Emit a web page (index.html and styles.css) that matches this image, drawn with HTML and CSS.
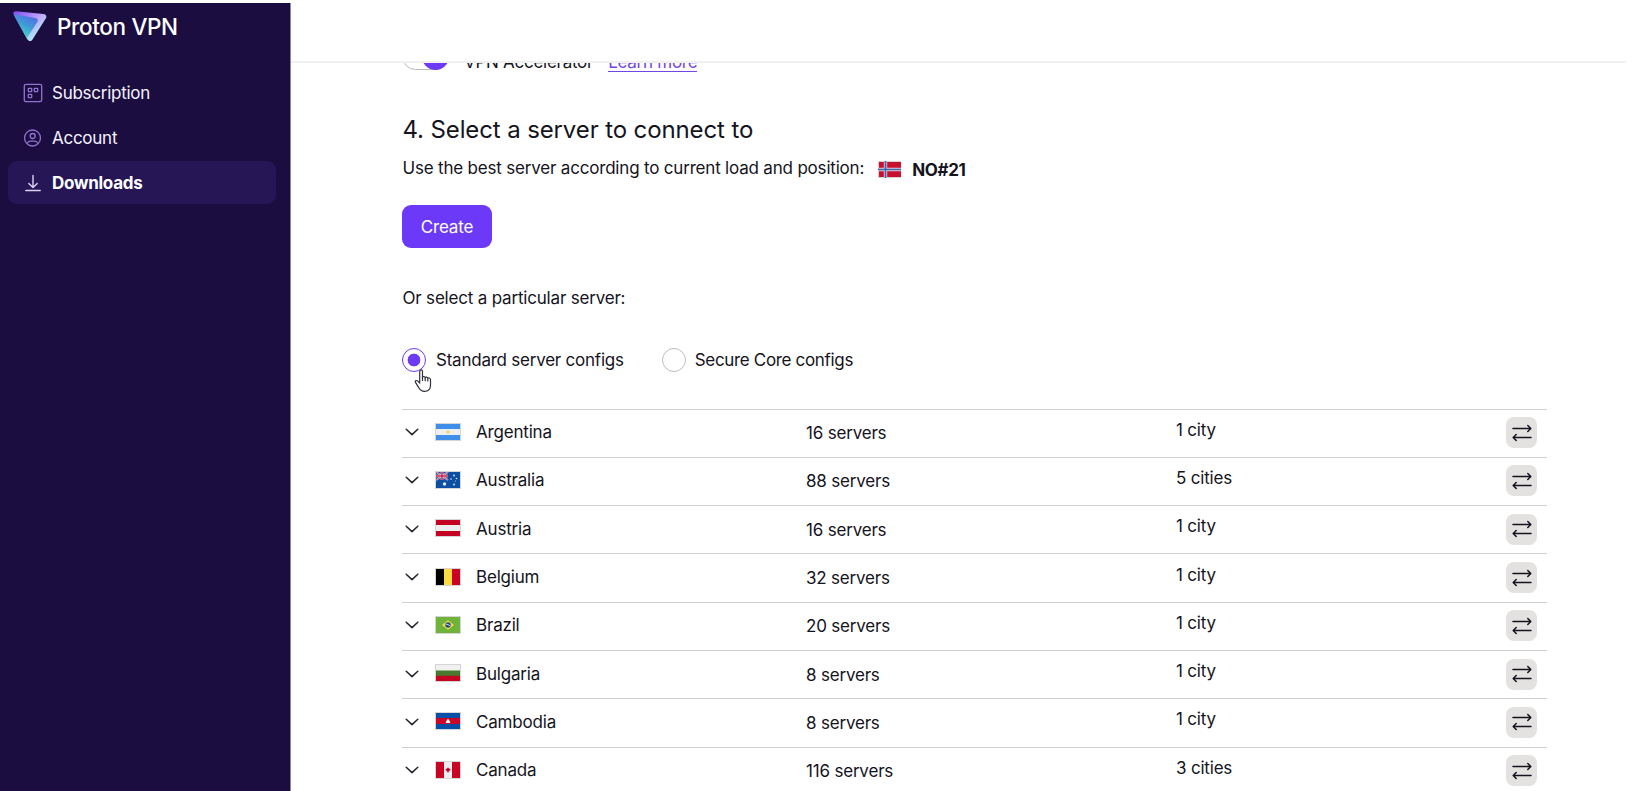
FILE: index.html
```
<!DOCTYPE html>
<html lang="en">
<head>
<meta charset="utf-8">
<title>Proton VPN</title>
<link rel="stylesheet" href="styles.css">
</head>
<body>
<svg class="defs" aria-hidden="true">
  <symbol id="chevron" viewBox="0 0 14 8"><path d="M1.2 1.2 7 6.6l5.800-5.400" fill="none" stroke="#25232c" stroke-width="1.500" stroke-linecap="round" stroke-linejoin="round"/></symbol>
  <symbol id="swap" viewBox="0 0 20 18"><g fill="none" stroke="#15131c" stroke-width="1.500" stroke-linecap="round" stroke-linejoin="round"><path d="M1 4.500h17.500M15.800 1.500l3 3-3 3"/><path d="M19 13.500H1.500M4.200 10.500l-3 3 3 3"/></g></symbol>
</svg>
<div class="app">
  <aside class="sidebar">
    <div class="brand">
      <svg class="brand-mark" width="34" height="32" viewBox="0 0 34 32">
        <defs>
          <linearGradient id="g1" x1="0" y1="0" x2="1" y2="1"><stop offset="0" stop-color="#8247ef"/><stop offset=".5" stop-color="#c0a8ff"/><stop offset=".85" stop-color="#a5fff0"/></linearGradient>
          <linearGradient id="g2" x1=".9" y1="0" x2=".4" y2="1"><stop offset="0" stop-color="#5864e8"/><stop offset=".5" stop-color="#3f9bd6"/><stop offset="1" stop-color="#45e0c4"/></linearGradient>
        </defs>
        <path d="M3 .3 30.500 3c2.500.3 3.600 2.200 2.400 4.300L19.500 28.500c-1.400 2.200-4 2-5.200-.2L.6 3.500C-.3 1.700 1 .1 3 .3z" fill="url(#g1)"/>
        <path d="M1 4.300c1-.8 2-.8 3.500-.6L22.500 7c2.200.4 3 2.200 1.800 4.100L14.800 25.500c-.6 1-.7 1.800-.4 2.900z" fill="url(#g2)"/>
      </svg>
      <span class="brand-name">Proton VPN</span>
    </div>
    <nav class="nav">
      <a class="nav-item"><svg width="20" height="20" viewBox="0 0 20 20" fill="none" stroke="#8f74cf" stroke-width="1.300"><rect x="1.300" y="1.300" width="17.400" height="17.400" rx="1.800"/><rect x="5.300" y="5.300" width="3.400" height="3.400" rx=".5"/><rect x="11.300" y="5.300" width="3.400" height="3.400" rx=".5"/><rect x="5.300" y="11.300" width="3.400" height="3.400" rx=".5"/></svg><span>Subscription</span></a>
      <a class="nav-item"><svg width="20" height="20" viewBox="0 0 20 20" fill="none" stroke="#8f74cf" stroke-width="1.300"><circle cx="9.500" cy="10" r="8"/><circle cx="9.700" cy="8" r="2.500"/><path d="M4.200 15.500c.6-1.600 1.500-2.300 3-2.300h4.600c1.500 0 2.400.7 3 2.300"/></svg><span>Account</span></a>
      <a class="nav-item active"><svg width="20" height="20" viewBox="0 0 20 20" fill="none" stroke="#ddd3f5" stroke-width="1.400" stroke-linecap="round" stroke-linejoin="round"><path d="M10 2.500v12M5.800 10.400l4.200 4.200 4.200-4.200M2.800 17.500h14.400"/></svg><span>Downloads</span></a>
    </nav>
  </aside>
  <main class="main">
    <header class="topbar"></header>
    <div class="scroll">
      <div class="accelerator"><span class="toggle"><i></i></span><span class="acc-label">VPN Accelerator</span><a class="learn">Learn more</a></div>
      <h2>4. Select a server to connect to</h2>
      <div class="best"><span class="best-text">Use the best server according to current load and position:</span>
        <svg class="no-flag" width="23" height="17" viewBox="0 0 23 17"><path fill="#d8cfd2" d="M0 0h23v17H0z"/><path fill="#c8102e" d="M1 1h22v15H1z"/><path stroke="#e5c8d4" stroke-width="3.400" d="M7.500 0v17M0 8.500h23"/><path stroke="#3f68b4" stroke-width="1.700" d="M7.500 0v17M0 8.500h23"/></svg>
        <strong>NO#21</strong></div>
      <button class="create">Create</button>
      <p class="or">Or select a particular server:</p>
      <div class="radios">
        <label class="radio checked"><i></i><span>Standard server configs</span>
          <svg class="cursor" width="19" height="24" viewBox="0 0 19 24"><path d="M5.700 14V2.400c0-2 2.800-2 2.800 0v6.100c.2-1.500 2.600-1.300 2.700.4.400-1.300 2.500-1 2.600.7.500-1.100 2.500-.9 2.700.9v5.500c0 4.200-2.200 6.400-6 6.400-3 0-4.600-1.300-5.800-3.800L1.500 13.400c-.9-1.800 1.300-2.500 2.400-1.200z" fill="#fff" stroke="#33313c" stroke-width="1.200" stroke-linejoin="round"/><path d="M8.500 8v4M11.200 9v3.200M13.800 10v2.500" stroke="#33313c" stroke-width="1.200"/></svg></label>
        <label class="radio secure"><i></i><span>Secure Core configs</span></label>
      </div>
      <div class="servers">
        <div class="row"><svg class="chev"><use href="#chevron"/></svg><svg class="flag" viewBox="0 0 24 16"><path fill="#3f8fe8" d="M0 0h24v16H0z"/><path fill="#eee" d="M0 5h24v6H0z"/><ellipse cx="12" cy="8" rx="1.800" ry="1.200" fill="#f3d54a"/></svg><span class="name">Argentina</span><span class="count">16 servers</span><span class="city">1 city</span><button class="swap"><svg><use href="#swap"/></svg></button></div>
        <div class="row"><svg class="chev"><use href="#chevron"/></svg><svg class="flag" viewBox="0 0 24 16"><path fill="#0b4ea2" d="M0 0h24v16H0z"/><path stroke="#d9cfe4" stroke-width="1.800" d="M0 0l12 8M12 0 0 8"/><path stroke="#c8284f" stroke-width=".7" d="M0 0l12 8M12 0 0 8"/><path stroke="#e8d9e6" stroke-width="2.600" d="M6 0v8M0 4h12"/><path stroke="#c8284f" stroke-width="1.500" d="M6 0v8M0 4h12"/><g fill="#dceaff"><circle cx="8.500" cy="12" r="1.700"/><circle cx="18" cy="3.500" r=".9"/><circle cx="15" cy="7" r=".8"/><circle cx="20.500" cy="6.500" r=".8"/><circle cx="18" cy="12.500" r=".9"/><circle cx="19.300" cy="9" r=".5"/></g></svg><span class="name">Australia</span><span class="count">88 servers</span><span class="city">5 cities</span><button class="swap"><svg><use href="#swap"/></svg></button></div>
        <div class="row"><svg class="chev"><use href="#chevron"/></svg><svg class="flag" viewBox="0 0 24 16"><path fill="#c40222" d="M0 0h24v16H0z"/><path fill="#eee" d="M0 5h24v6H0z"/></svg><span class="name">Austria</span><span class="count">16 servers</span><span class="city">1 city</span><button class="swap"><svg><use href="#swap"/></svg></button></div>
        <div class="row"><svg class="chev"><use href="#chevron"/></svg><svg class="flag" viewBox="0 0 24 16"><path fill="#000" d="M0 0h8v16H0z"/><path fill="#fbdb42" d="M8 0h8v16H8z"/><path fill="#c90226" d="M16 0h8v16h-8z"/></svg><span class="name">Belgium</span><span class="count">32 servers</span><span class="city">1 city</span><button class="swap"><svg><use href="#swap"/></svg></button></div>
        <div class="row"><svg class="chev"><use href="#chevron"/></svg><svg class="flag" viewBox="0 0 24 16"><path fill="#70b33b" d="M0 0h24v16H0z"/><path fill="#f5d940" d="M12 3.200 18 8l-6 4.800L6 8z"/><circle cx="12" cy="8" r="2.700" fill="#174f91"/><path stroke="#d9e9f0" stroke-width=".9" fill="none" d="M9.800 7.200q2.500-.3 4.300 1.800"/></svg><span class="name">Brazil</span><span class="count">20 servers</span><span class="city">1 city</span><button class="swap"><svg><use href="#swap"/></svg></button></div>
        <div class="row"><svg class="chev"><use href="#chevron"/></svg><svg class="flag" viewBox="0 0 24 16"><path fill="#f0f0ee" d="M0 0h24v6H0z"/><path fill="#477a2c" d="M0 5.500h24v5.500H0z"/><path fill="#c40222" d="M0 10.800h24V16H0z"/></svg><span class="name">Bulgaria</span><span class="count">8 servers</span><span class="city">1 city</span><button class="swap"><svg><use href="#swap"/></svg></button></div>
        <div class="row"><svg class="chev"><use href="#chevron"/></svg><svg class="flag" viewBox="0 0 24 16"><path fill="#064fa8" d="M0 0h24v16H0z"/><path fill="#cc0629" d="M0 5h24v6H0z"/><path fill="#fff" d="m12 5.800 1.300 1.700 1.200 2.500h-5l1.200-2.500z"/></svg><span class="name">Cambodia</span><span class="count">8 servers</span><span class="city">1 city</span><button class="swap"><svg><use href="#swap"/></svg></button></div>
        <div class="row"><svg class="chev"><use href="#chevron"/></svg><svg class="flag" viewBox="0 0 24 16"><path fill="#eee" d="M0 0h24v16H0z"/><path fill="#c90226" d="M0 0h8v16H0zM16 0h8v16h-8zM12 5.200l1 1.300 1.700.8-1.700 2.200-.7.200V11h-.6V9.700l-.7-.2-1.700-2.200 1.700-.8z"/></svg><span class="name">Canada</span><span class="count">116 servers</span><span class="city">3 cities</span><button class="swap"><svg><use href="#swap"/></svg></button></div>
      </div>
    </div>
  </main>
</div>
</body>
</html>
```
FILE: styles.css
```
* { box-sizing: border-box; }
body { margin: 0; height: 791px; overflow: hidden; background: #fff; color: #15131c; font: 17px/24px Inter, "Liberation Sans", sans-serif; letter-spacing: -.19px; }
.defs { position: absolute; width: 0; height: 0; }
svg { flex: none; display: block; }
.app { display: flex; height: 791px; padding-top: 3px; }
.sidebar { width: 291px; flex: none; background: #1b0d3f; border-right: 1px solid #8d869f; }
.brand { display: flex; height: 62px; padding: 8px 0 0 13px; gap: 10px; }
.brand-name { color: #fff; font-size: 22.500px; font-weight: 500; line-height: 31px; letter-spacing: -.35px; white-space: nowrap; }
.nav { padding: 6px 14px 0 8px; }
.nav-item { display: flex; align-items: center; height: 43px; margin-bottom: 2px; padding-left: 15px; gap: 9px; border-radius: 9px; color: #f6f3ff; letter-spacing: -.26px; }
.nav-item.active { background: #261655; font-weight: 700; color: #fff; }
.main { flex: 1; min-width: 0; display: flex; flex-direction: column; }
.topbar { height: 60px; flex: none; margin-right: 18px; border-bottom: 2px solid #f0f0ee; }
.scroll { flex: 1; min-height: 0; overflow: hidden; padding-left: 111px; }
.accelerator { display: flex; height: 24px; margin-top: -13px; letter-spacing: -.27px; }
.toggle { width: 47px; height: 27px; margin-top: -7px; border: 1px solid #bbb; border-radius: 14px; display: flex; justify-content: flex-end; }
.toggle i { width: 27px; height: 27px; margin: -1px; border-radius: 50%; background: #6d39f8; }
.acc-label { margin-left: 15px; }
.learn { margin-left: 15px; height: 22px; color: #7646e0; border-bottom: 1px solid #7646e0; }
h2 { margin: 39px 0 0 .5px; font-size: 24px; line-height: 34px; font-weight: 400; letter-spacing: -.12px; }
.best { display: flex; align-items: center; margin-top: 9px; height: 24px; padding-left: .5px; }
.no-flag { margin: 3px 11px 0 14px; }
.best strong { margin-top: 3px; letter-spacing: -.35px; }
.create { display: block; width: 90px; height: 43px; margin-top: 25px; padding: 0; border: 0; border-radius: 9px; background: #6d39f8; color: #fff; font: inherit; letter-spacing: inherit; }
.or { margin: 38px 0 0 .5px; }
.radios { display: flex; height: 24px; margin-top: 38px; gap: 38px; }
.radio { display: flex; align-items: center; position: relative; gap: 10px; letter-spacing: -.23px; }
.secure { gap: 9px; letter-spacing: -.33px; }
.radio i { width: 24px; height: 24px; flex: none; border: 1px solid #bdbdbd; border-radius: 50%; }
.radio.checked i { border-color: #6d39f8; background: radial-gradient(circle, #6d39f8 6px, #fff 6.700px); }
.cursor { position: absolute; left: 12px; top: 21px; }
.servers { width: 1145px; margin-top: 36.500px; }
.row { display: grid; grid-template-columns: 33px 41px 330px 370px 1fr 41px; align-items: center; height: 48.300px; padding-bottom: 2px; border-top: 1px solid #cfcfcf; }
.chev { width: 14px; height: 8px; margin-left: 3px; }
.flag { width: 26px; height: 18px; margin-top: -1px; border: 1px solid #d5d5d5; }
.count { margin-top: 2px; }
.city { margin-top: -5px; }
.swap { width: 31px; height: 31px; margin-top: 1px; padding: 0; border: 0; border-radius: 8px; background: #e3e2e1; display: flex; align-items: center; justify-content: center; }
.swap svg { width: 20px; height: 18px; }
```
